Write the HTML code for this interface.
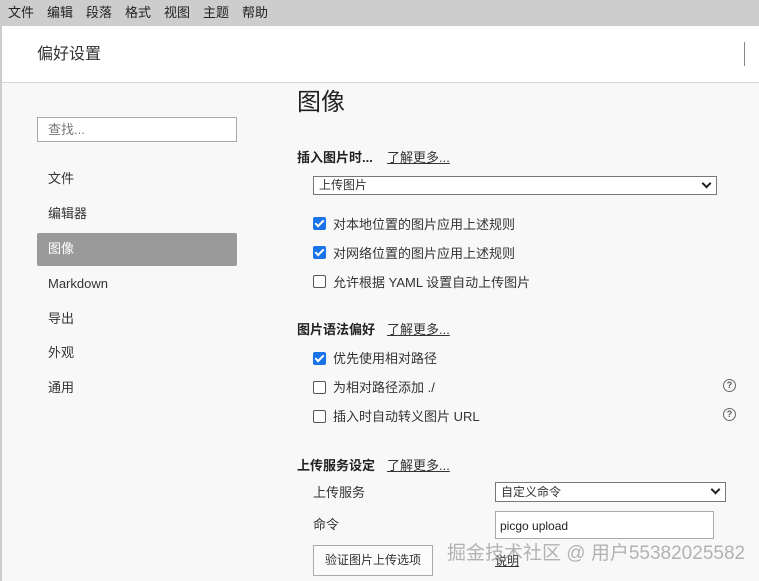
<!DOCTYPE html>
<html><head><meta charset="utf-8"><style>
*{margin:0;padding:0;box-sizing:border-box}
body{width:759px;height:581px;overflow:hidden;background:#f8f8f8;font-family:"Liberation Sans","Noto Sans CJK SC",sans-serif;color:#333;position:relative;font-size:13px;line-height:18px}
.a{position:absolute;white-space:nowrap}
#menu{left:0;top:0;width:759px;height:26px;background:#cdcdcd;font-size:13px;color:#222}
#menu span{position:absolute;top:4px}
#hdr{left:2px;top:26px;width:757px;height:57px;background:#fff;border-bottom:1px solid #d8d8d8}
.cb{position:absolute;width:13px;height:13px;border-radius:2px}
.on{background:#1a73e8}
.on:after{content:"";position:absolute;left:4px;top:1px;width:3px;height:7px;border:solid #fff;border-width:0 2px 2px 0;transform:rotate(45deg)}
.off{border:1px solid #555;background:#fff}
.lk{text-decoration:underline;color:#333}
.sel{position:absolute;background:#fff;border:1px solid #777;font-size:12px;padding-left:5px}
.sel:after{content:"";position:absolute;right:6px;top:3px;width:5px;height:5px;border:solid #222;border-width:0 2px 2px 0;transform:rotate(45deg)}
.q{position:absolute;width:13px;height:13px;border:1.3px solid #666;border-radius:50%;font-size:9px;text-align:center;line-height:11px;color:#555;font-weight:bold}
</style></head><body>
<div class="a" style="left:0;top:26px;width:2px;height:555px;background:#cdcdcd"></div>
<div class="a" id="menu"><span style="left:8px">文件</span><span style="left:47px">编辑</span><span style="left:86px">段落</span><span style="left:125px">格式</span><span style="left:164px">视图</span><span style="left:203px">主题</span><span style="left:242px">帮助</span></div>
<div class="a" id="hdr"></div>
<div class="a" style="left:37px;top:44px;font-size:16px;line-height:22px;color:#333">偏好设置</div>
<div class="a" style="left:744px;top:42px;width:1px;height:24px;background:#888"></div>
<div class="a" style="left:37px;top:117px;width:200px;height:25px;border:1px solid #aaa;background:#fff;font-size:13px;color:#777;padding:3px 10px">查找...</div>
<div class="a" style="left:48px;top:170px">文件</div>
<div class="a" style="left:48px;top:205px">编辑器</div>
<div class="a" style="left:37px;top:233px;width:200px;height:33px;background:#9a9a9a;border-radius:2px;color:#fff;padding:7px 11px">图像</div>
<div class="a" style="left:48px;top:275px">Markdown</div>
<div class="a" style="left:48px;top:310px">导出</div>
<div class="a" style="left:48px;top:344px">外观</div>
<div class="a" style="left:48px;top:379px">通用</div>

<div class="a" style="left:297px;top:88px;font-size:24px;line-height:30px;color:#222">图像</div>
<div class="a" style="left:297px;top:149px;font-weight:bold;color:#222">插入图片时...</div>
<div class="a lk" style="left:387px;top:149px">了解更多...</div>
<div class="sel" style="left:313px;top:176px;width:404px;height:19px;line-height:17px">上传图片</div>
<div class="cb on" style="left:313px;top:217px"></div><div class="a" style="left:333px;top:216px">对本地位置的图片应用上述规则</div>
<div class="cb on" style="left:313px;top:246px"></div><div class="a" style="left:333px;top:245px">对网络位置的图片应用上述规则</div>
<div class="cb off" style="left:313px;top:275px"></div><div class="a" style="left:333px;top:274px">允许根据 YAML 设置自动上传图片</div>

<div class="a" style="left:297px;top:321px;font-weight:bold;color:#222">图片语法偏好</div>
<div class="a lk" style="left:387px;top:321px">了解更多...</div>
<div class="cb on" style="left:313px;top:352px"></div><div class="a" style="left:333px;top:350px">优先使用相对路径</div>
<div class="cb off" style="left:313px;top:381px"></div><div class="a" style="left:333px;top:379px">为相对路径添加 ./</div>
<div class="q" style="left:723px;top:379px">?</div>
<div class="cb off" style="left:313px;top:410px"></div><div class="a" style="left:333px;top:408px">插入时自动转义图片 URL</div>
<div class="q" style="left:723px;top:408px">?</div>

<div class="a" style="left:297px;top:457px;font-weight:bold;color:#222">上传服务设定</div>
<div class="a lk" style="left:387px;top:457px">了解更多...</div>
<div class="a" style="left:313px;top:484px">上传服务</div>
<div class="sel" style="left:495px;top:482px;width:231px;height:20px;line-height:18px">自定义命令</div>
<div class="a" style="left:313px;top:516px">命令</div>
<div class="a" style="left:495px;top:511px;width:219px;height:28px;border:1px solid #aaa;background:#fff;font-size:12px;padding:5px 4px;color:#222">picgo upload</div>
<div class="a" style="left:313px;top:545px;width:120px;height:31px;border:1px solid #aaa;background:#fbfbfb;font-size:12px;text-align:center;line-height:29px">验证图片上传选项</div>
<div class="a lk" style="left:495px;top:552px;font-size:12px">说明</div>
<div class="a" style="left:447px;top:541px;font-size:19px;line-height:26px;color:rgba(120,120,120,0.55)">掘金技术社区 @ 用户55382025582</div>
</body></html>
